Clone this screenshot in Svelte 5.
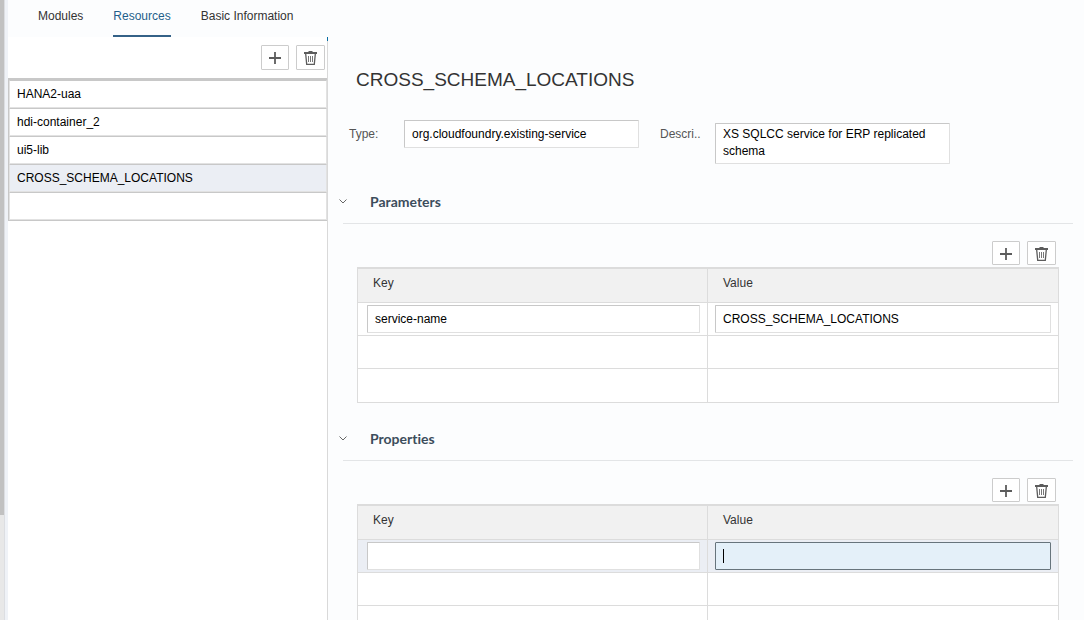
<script>
  const tabs = ['Modules', 'Resources', 'Basic Information'];
  let activeTab = $state('Resources');

  let resources = $state(['HANA2-uaa', 'hdi-container_2', 'ui5-lib', 'CROSS_SCHEMA_LOCATIONS', '']);
  let selected = $state(3);

  let type = $state('org.cloudfoundry.existing-service');
  let description = $state('XS SQLCC service for ERP replicated schema');

  let sections = $state([
    { title: 'Parameters', rows: [{ key: 'service-name', value: 'CROSS_SCHEMA_LOCATIONS' }], active: false },
    { title: 'Properties', rows: [{ key: '', value: '' }], active: true }
  ]);
</script>

{#snippet tools()}
  <div class="tools">
    <button class="tool add" type="button" aria-label="Add">
      <svg width="14" height="14" viewBox="0 0 14 14"><path d="M7 1v12M1 7h12" /></svg>
    </button>
    <button class="tool" type="button" aria-label="Delete">
      <svg width="13" height="14" viewBox="0 0 13 14">
        <path class="lid" d="M0 1h4.5V0h4v1H13v2H0z" />
        <path class="bin" d="M1.7 3l1 10.4h7.6l1-10.4" />
        <path class="rib" d="M4.5 5v6M6.5 5v6M8.5 5v6" />
      </svg>
    </button>
  </div>
{/snippet}

<div class="app">
  <div class="rail"><div class="thumb"></div></div>
  <div class="page">
    <nav class="tabs">
      {#each tabs as tab}
        <button type="button" class="tab" class:active={tab === activeTab} onclick={() => (activeTab = tab)}>{tab}</button>
      {/each}
    </nav>
    <div class="body">
      <aside class="side">
        {@render tools()}
        <div class="list">
          {#each resources as name, i}
            <input
              class="resource"
              class:selected={i === selected}
              aria-label="Resource name"
              bind:value={resources[i]}
              onfocus={() => (selected = i)}
            />
          {/each}
        </div>
      </aside>
      <main class="detail">
        <h1>{resources[selected]}</h1>
        <div class="form">
          <label for="type">Type:</label>
          <input id="type" class="field" bind:value={type} />
          <label for="description">Descri..</label>
          <textarea id="description" class="field" rows="2" bind:value={description}></textarea>
        </div>
        {#each sections as section}
          <section>
            <h2>
              <svg width="8" height="5" viewBox="0 0 8 5"><path d="M0.5 0.5L4 4L7.5 0.5" /></svg>
              {section.title}
            </h2>
            <div class="content">
              {@render tools()}
              <table>
                <thead>
                  <tr><th>Key</th><th>Value</th></tr>
                </thead>
                <tbody>
                  {#each section.rows as row}
                    <tr class:current={section.active}>
                      <td><input class="field" aria-label="Key" bind:value={row.key} /></td>
                      <td>
                        <div class="cell">
                          <input class="field" class:focused={section.active} aria-label="Value" bind:value={row.value} />
                          {#if section.active && !row.value}<span class="caret"></span>{/if}
                        </div>
                      </td>
                    </tr>
                  {/each}
                  <tr><td></td><td></td></tr>
                  <tr><td></td><td></td></tr>
                </tbody>
              </table>
            </div>
          </section>
        {/each}
      </main>
    </div>
  </div>
</div>

<style>
  :global(body) {
    overflow: hidden;
  }

  .app,
  .app * {
    box-sizing: border-box;
  }

  .app {
    display: flex;
    height: 100vh;
    background: #fcfdfe;
    color: #333;
    font: 12px/17px 'Liberation Sans', Arial, sans-serif;
  }

  button,
  input,
  textarea {
    margin: 0;
    font: inherit;
    outline: none;
  }

  .rail {
    flex: none;
    width: 8px;
    background: linear-gradient(to right, #e8e8e8 4px, #dcdee2 4px, #dcdee2 5px, #eff2f7 5px);
  }

  .thumb {
    width: 4px;
    height: 83%;
    background: #c1c1c1;
  }

  .page {
    flex: 1;
    min-width: 0;
    display: flex;
    flex-direction: column;
  }

  .tabs {
    flex: none;
    display: flex;
    gap: 30px;
    height: 37px;
    padding-left: 30px;
  }

  .tab {
    padding: 0 0 3px;
    border: 0;
    border-bottom: 2px solid transparent;
    background: none;
    color: #333;
  }

  .tab.active {
    border-color: #346187;
    color: #1f5f8b;
  }

  .body {
    flex: 1;
    min-height: 0;
    display: flex;
  }

  .side {
    position: relative;
    flex: none;
    width: 320px;
    padding-top: 8px;
    border-right: 1px solid #d9d9d9;
    background: #fff;
  }

  .side::after {
    content: '';
    position: absolute;
    top: 0;
    right: -1px;
    width: 1px;
    height: 4px;
    background: #0a6ea4;
  }

  .tools {
    display: flex;
    justify-content: flex-end;
    gap: 7px;
    padding-right: 2px;
  }

  .content .tools {
    padding-right: 3px;
  }

  .tool {
    display: flex;
    align-items: center;
    justify-content: center;
    width: 29px;
    height: 25px;
    padding: 0;
    border: 1px solid #ccc;
    border-radius: 1px;
    background: #fff;
  }

  .content .tool {
    height: 24px;
    padding-top: 2px;
  }

  .tool.add {
    width: 28px;
  }

  .tool path {
    fill: none;
    stroke: #5c5c5c;
    stroke-width: 1.8;
  }

  .tool .lid {
    fill: #5c5c5c;
    stroke: none;
  }

  .tool .bin {
    stroke-width: 1.3;
  }

  .tool .rib {
    stroke: #777;
    stroke-width: 1;
  }

  .list {
    display: flex;
    flex-direction: column;
    margin-top: 8px;
    border: solid #c8c8c8;
    border-width: 2px 0 1px 1px;
  }

  .resource {
    width: 100%;
    height: 28px;
    padding: 0 7px;
    border: 1px solid #e2e2e2;
    border-top-color: #c8c8c8;
    background: #fff;
    color: #000;
  }

  .resource.selected {
    background: #ebeef4;
  }

  .detail {
    flex: 1;
    min-width: 0;
    overflow: hidden;
    padding: 30px 11px 0 15px;
  }

  h1 {
    min-height: 26px;
    margin: 0 0 0 13px;
    font-size: 19px;
    line-height: 26px;
    font-weight: 400;
  }

  .form {
    display: grid;
    grid-template-columns: 55px minmax(0, 256px) 55px minmax(0, 235px);
    align-items: start;
    padding: 27px 0 22px 6px;
  }

  .form label {
    padding-top: 6px;
    color: #555;
  }

  #type {
    width: calc(100% - 21px);
  }

  .field {
    display: block;
    width: 100%;
    height: 28px;
    padding: 0 7px;
    border: 1px solid #e0e0e0;
    border-top-color: #c8c8c8;
    border-left-color: #c8c8c8;
    border-radius: 1px;
    background: #fff;
    color: #000;
  }

  textarea.field {
    height: 41px;
    margin-top: 3px;
    padding: 2px 7px;
    resize: none;
    overflow: hidden;
  }

  .field.focused {
    border-color: #67747c;
    background: #e4f0f9;
    caret-color: transparent;
  }

  h2 {
    display: flex;
    align-items: center;
    gap: 23px;
    height: 38px;
    margin: 0;
    padding-bottom: 6px;
    border-bottom: 1px solid #e3e5e7;
    color: #3c4d5c;
    font: 700 14px/20px Lato, 'Open Sans', sans-serif;
    font-variant-ligatures: none;
  }

  h2 svg {
    margin-left: -4px;
  }

  h2 path {
    fill: none;
    stroke: #666;
  }

  .content {
    padding: 17px 14px 20px;
  }

  table {
    width: 100%;
    margin-top: 2px;
    border: 1px solid #dcdcdc;
    border-top-width: 2px;
    border-spacing: 0;
    table-layout: fixed;
    background: #fff;
  }

  th,
  td {
    border-bottom: 1px solid #dcdcdc;
    text-align: left;
  }

  th:first-child,
  td:first-child {
    border-right: 1px solid #dcdcdc;
  }

  th {
    height: 34px;
    padding: 0 15px 5px;
    background: #f1f1f1;
    font-weight: 400;
  }

  td {
    height: 33px;
    padding: 0 7px;
  }

  td:first-child {
    padding-left: 9px;
  }

  tbody tr:last-child td {
    border-bottom: 0;
  }

  .current td {
    background: #ebeef4;
  }

  .cell {
    position: relative;
  }

  .caret {
    position: absolute;
    top: 7px;
    left: 8px;
    width: 1px;
    height: 14px;
    background: #000;
  }
</style>
